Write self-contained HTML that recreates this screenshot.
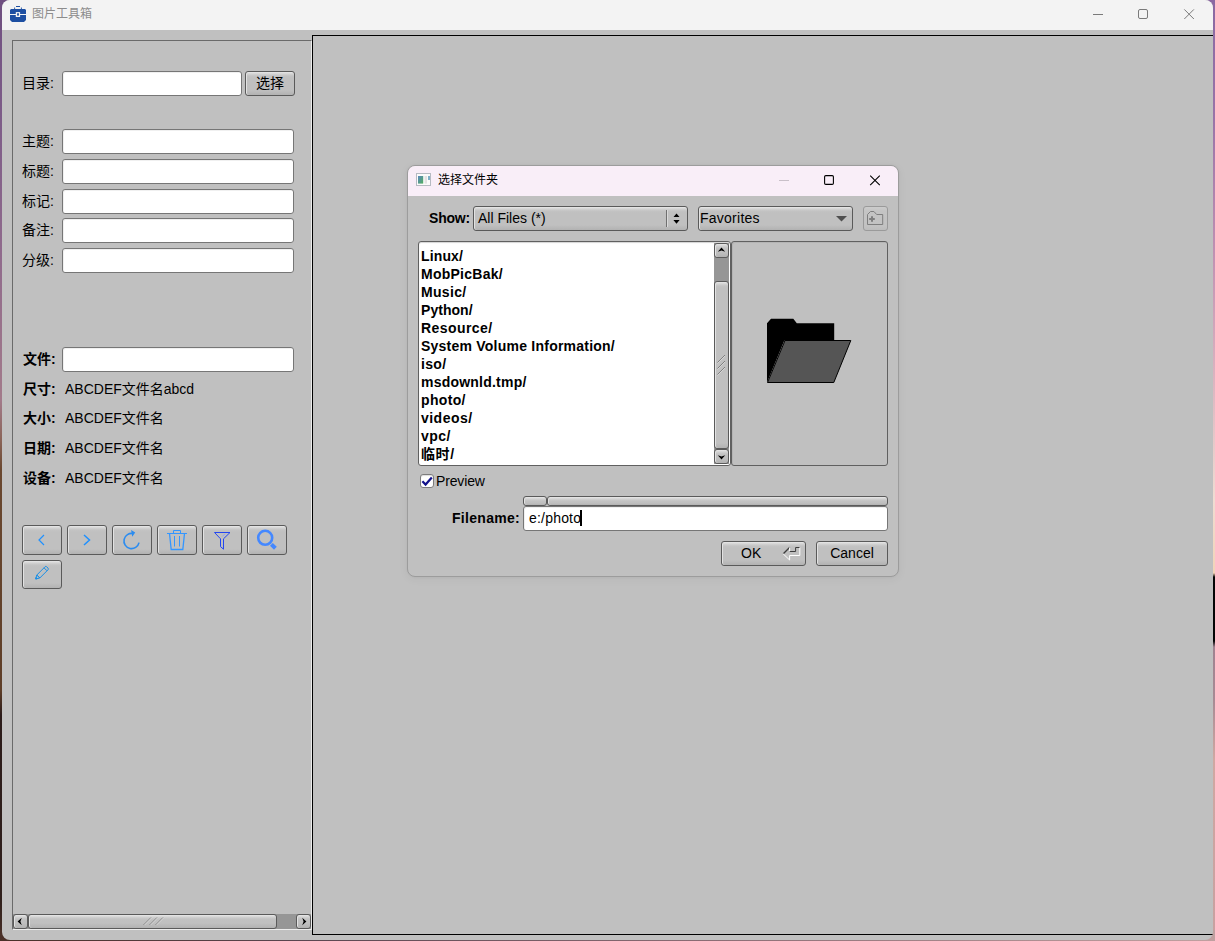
<!DOCTYPE html>
<html lang="zh-CN">
<head>
<meta charset="utf-8">
<title>图片工具箱</title>
<style>
*{box-sizing:border-box;margin:0;padding:0}
html,body{width:1215px;height:941px;overflow:hidden}
body{position:relative;background:#6a5060;font-family:"Liberation Sans","Noto Sans CJK SC",sans-serif;font-size:14px;color:#000}
.abs{position:absolute}
#deskL{left:0;top:0;width:12px;height:941px;background:linear-gradient(to bottom,#6f4f80 0,#7d5c88 120px,#8f6a8c 250px,#a27a8a 400px,#8a6458 440px,#6a4830 470px,#5e3e28 690px,#2c1c1a 715px,#30201c 900px,#4a3028 941px)}
#deskR{left:1203px;top:0;width:12px;height:941px;background:linear-gradient(to bottom,#8a68a2 0,#9a74a8 120px,#c090b2 250px,#dcb4c0 380px,#f0dcd2 500px,#f2d4b8 573px,#050505 577px,#050505 641px,#a08290 647px,#a88a94 700px,#d0a8a2 760px,#c8a0a0 941px)}
#deskB{left:0;top:930px;width:1215px;height:11px;background:linear-gradient(to right,#4a3028 0,#5a4650 300px,#8a6c74 700px,#c0a0a0 1215px)}
#win{left:2px;top:0;width:1210.5px;height:939.5px;background:#c0c0c0;border-radius:8px;overflow:hidden}
#tbar{left:0;top:0;width:100%;height:30px;background:#f3f3f3}
#ttl{left:30px;top:0;height:29px;line-height:28px;font-size:12px;color:#8c8c8c;white-space:nowrap}
.lbl{position:absolute;white-space:nowrap;line-height:20px;height:20px}
.b{font-weight:bold}
.inp{position:absolute;background:#fff;border:1px solid #767676;border-radius:3px;box-shadow:inset 1px 1px 0 #f0f0f0}
.btn{position:absolute;border:1px solid #5a5a5a;border-radius:3px;background:linear-gradient(to bottom,#e8e8e8 0,#d2d2d2 2px,#c3c3c3 4px,#c0c0c0 6px,#c0c0c0 calc(100% - 5px),#b2b2b2 100%);box-shadow:inset 1px 0 0 #e2e2e2}
.btn svg{position:absolute;left:-1px;top:-1px;overflow:visible}

#dlg{left:407px;top:165px;width:492px;height:412px;border:1px solid #9c9c9c;border-radius:8px;background:#c0c0c0;overflow:hidden;box-shadow:0 2px 10px rgba(0,0,0,.05),0 0 3px rgba(0,0,0,.04)}
#dbar{left:0;top:0;width:490px;height:30px;background:#f9eef8}
#d{left:-408px;top:-166px;width:1215px;height:941px}
.row{position:absolute;left:421px;height:18px;line-height:18px;font-weight:bold;white-space:nowrap}
</style>
</head>
<body>
<div id="deskL" class="abs"></div>
<div id="deskR" class="abs"></div>
<div id="deskB" class="abs"></div>

<div id="win" class="abs">
  <div id="tbar" class="abs"></div>
  <!-- app icon -->
  <svg class="abs" style="left:8px;top:6px" width="16" height="16" viewBox="0 0 16 16" fill="#1d4fa2">
    <rect x="6" y="0" width="4" height="1"/>
    <path d="M4.200 1.400h.900v1.700h-.900zM10.900 1.400h.900v1.700h-.900z"/>
    <path d="M1 3h14l1 1v4H0V4z"/>
    <path d="M0 9h16v5l-2 2H2l-2-2z"/>
    <rect x="5.800" y="6.100" width="4.300" height="4.900" fill="#f3f3f3"/>
    <rect x="7.100" y="7.100" width="1.800" height="2.800" rx=".8"/>
  </svg>
  <div id="ttl" class="abs">图片工具箱</div>
  <!-- caption buttons -->
  <svg class="abs" style="left:1080px;top:0" width="130" height="30" viewBox="0 0 130 30" fill="none" stroke="#7a7a7a" stroke-width="1">
    <path d="M11 14.5h10"/>
    <rect x="56.5" y="9.5" width="9" height="9" rx="1.5"/>
    <path d="M102.300 9.400l9.600 9.600M111.900 9.400l-9.600 9.600"/>
  </svg>

  <!-- left scroll frame -->
  <div class="abs" style="left:10px;top:40px;width:300px;height:890px;border-top:1px solid #6a6a6a;border-left:1px solid #6a6a6a;border-right:1px solid #ececec;border-bottom:1px solid #ececec"></div>
  <!-- right panel -->
  <div class="abs" style="left:310px;top:35px;width:910px;height:900px;border:1px solid #000"></div>

  <div id="form" class="abs" style="left:-2px;top:0;width:1215px;height:941px">
    <div class="lbl" style="left:22px;top:73px">目录:</div>
    <div class="inp" style="left:62px;top:71px;width:180px;height:25px"></div>
    <div class="btn" style="left:245px;top:71px;width:50px;height:25px;text-align:center;line-height:22px">选择</div>
    <div class="lbl" style="left:22px;top:131px">主题:</div>
    <div class="inp" style="left:62px;top:129px;width:232px;height:25px"></div>
    <div class="lbl" style="left:22px;top:161px">标题:</div>
    <div class="inp" style="left:62px;top:159px;width:232px;height:25px"></div>
    <div class="lbl" style="left:22px;top:191px">标记:</div>
    <div class="inp" style="left:62px;top:189px;width:232px;height:25px"></div>
    <div class="lbl" style="left:22px;top:220px">备注:</div>
    <div class="inp" style="left:62px;top:218px;width:232px;height:25px"></div>
    <div class="lbl" style="left:22px;top:250px">分级:</div>
    <div class="inp" style="left:62px;top:248px;width:232px;height:25px"></div>
    <div class="lbl b" style="left:23px;top:349px">文件:</div>
    <div class="inp" style="left:62px;top:347px;width:232px;height:25px"></div>
    <div class="lbl b" style="left:23px;top:379px">尺寸:</div>
    <div class="lbl" style="left:65px;top:379px">ABCDEF文件名abcd</div>
    <div class="lbl b" style="left:23px;top:408px">大小:</div>
    <div class="lbl" style="left:65px;top:408px">ABCDEF文件名</div>
    <div class="lbl b" style="left:23px;top:438px">日期:</div>
    <div class="lbl" style="left:65px;top:438px">ABCDEF文件名</div>
    <div class="lbl b" style="left:23px;top:468px">设备:</div>
    <div class="lbl" style="left:65px;top:468px">ABCDEF文件名</div>
  </div>
  <div id="tools" class="abs" style="left:-2px;top:0;width:1215px;height:941px">
    <div class="btn" style="left:22px;top:525px;width:40px;height:30px"><svg width="40" height="30" viewBox="0 0 40 30" fill="none" stroke="#1e90ff" stroke-width="1.2"><path d="M22 10l-5 5 5 5"/></svg></div>
    <div class="btn" style="left:67px;top:525px;width:40px;height:30px"><svg width="40" height="30" viewBox="0 0 40 30" fill="none" stroke="#1e90ff" stroke-width="1.5"><path d="M17 10l5.5 5-5.5 5"/></svg></div>
    <div class="btn" style="left:112px;top:525px;width:40px;height:30px"><svg width="40" height="30" viewBox="0 0 40 30" fill="none" stroke="#2b8cf0" stroke-width="1.6"><path d="M21.2 8.6A7.6 7.6 0 1 0 27 17.6"/><path d="M19.1 5l4.1 2.6-3 4.1z" fill="#2b8cf0" stroke="none"/></svg></div>
    <div class="btn" style="left:157px;top:525px;width:40px;height:30px"><svg width="40" height="30" viewBox="0 0 40 30" fill="none" stroke="#3396ff" stroke-width="1"><path d="M10 8.5h20"/><path d="M16.5 8.5v-3h7v3"/><path d="M12.5 8.5l1.7 16h11.6l1.7-16" stroke-width="1.3"/><path d="M17.5 11v10.5M22.5 11v10.5"/></svg></div>
    <div class="btn" style="left:202px;top:525px;width:40px;height:30px"><svg width="40" height="30" viewBox="0 0 40 30" fill="none" stroke="#2347f0" stroke-width="1"><path d="M12.5 7.5h15.5l-6.5 6.3v10.4l-3-2.6v-7.8z"/><path d="M20.2 11.5l2.6-2.6" stroke="#8aa0f8"/></svg></div>
    <div class="btn" style="left:247px;top:525px;width:40px;height:30px"><svg width="40" height="30" viewBox="0 0 40 30" fill="none" stroke="#4488ff"><circle cx="18.2" cy="12.8" r="7" stroke-width="2.6"/><path d="M24.4 19.4l4 3.8" stroke-width="4"/></svg></div>
    <div class="btn" style="left:22px;top:560px;width:40px;height:29px"><svg width="40" height="29" viewBox="0 0 40 29" fill="none" stroke="#1a8fe6" stroke-width="1"><path d="M14.8 15L23 6.8a1.2 1.2 0 0 1 1.7 0l1.3 1.3a1.2 1.2 0 0 1 0 1.7L17.8 18z"/><path d="M22 7.8l3 3"/><path d="M14.8 15l-1.1 4 4.1-1z"/><path d="M13.7 19l1.6-.4-1.2-1.2z" fill="#1a8fe6"/></svg></div>
  </div>
  <div id="hscroll" class="abs" style="left:11px;top:914px;width:298px;height:15px;background:#969696">
    <div class="btn" style="left:0;top:0;width:15px;height:15px;border-radius:3px"><svg width="15" height="15" viewBox="0 0 15 15"><path d="M4.6 7.5L8.8 3.8 7.4 7.5 8.8 11.2z" fill="#000"/></svg></div>
    <div class="btn" style="left:15px;top:0;width:249px;height:15px;border-radius:3px"><svg width="249" height="15" viewBox="0 0 249 15" fill="none"><path d="M115.5 11l7.5-7.5M121.5 11l7.5-7.5M127.5 11l7.5-7.5" stroke="#808080" stroke-width="1"/><path d="M116.5 11l7.5-7.5M122.5 11l7.5-7.5M128.5 11l7.5-7.5" stroke="#dcdcdc" stroke-width=".8"/></svg></div>
    <div class="btn" style="left:283px;top:0;width:15px;height:15px;border-radius:3px"><svg width="15" height="15" viewBox="0 0 15 15"><path d="M10.4 7.5L6.2 3.8 7.6 7.5 6.2 11.2z" fill="#000"/></svg></div>
  </div>
</div>

<div id="dlg" class="abs">
  <div id="dbar" class="abs"></div>
  <div id="d" class="abs">
    <!-- default window icon -->
    <svg class="abs" style="left:416px;top:173px" width="15" height="13" viewBox="0 0 15 13">
      <defs><linearGradient id="gi" x1="0" y1="0" x2="1" y2="1"><stop offset="0" stop-color="#5b86c0"/><stop offset="1" stop-color="#4fae5c"/></linearGradient></defs>
      <rect x=".5" y=".5" width="14" height="12" fill="#fbfbfb" stroke="#b6bac2"/>
      <rect x="2" y="3" width="5.2" height="7.6" fill="url(#gi)"/>
      <rect x="8.6" y="3" width="2.4" height="7.6" fill="#e2e2e2"/>
      <rect x="12" y="3" width="2" height="4" fill="#7fb0c8"/>
    </svg>
    <div class="abs" style="left:438px;top:166px;height:29px;line-height:29px;font-size:12px;white-space:nowrap">选择文件夹</div>
    <svg class="abs" style="left:770px;top:166px" width="125" height="30" viewBox="0 0 125 30" fill="none" stroke="#000" stroke-width="1.1">
      <path d="M9 14.5h10" stroke="#c9c0c9" stroke-width="1"/>
      <rect x="54.6" y="9.6" width="8.8" height="8.8" rx="1.2"/>
      <path d="M100.2 9.6l9.6 9.6M109.8 9.6l-9.6 9.6"/>
    </svg>

    <div class="lbl b" style="left:429px;top:208px;letter-spacing:-.2px">Show:</div>
    <div class="btn" style="left:473px;top:206px;width:215px;height:25px;line-height:22px;padding-left:4px;white-space:nowrap">All Files (*)
      <svg width="215" height="25" viewBox="0 0 215 25"><path d="M193.5 4v17" stroke="#707070"/><path d="M194.5 4v17" stroke="#dadada"/><path d="M203.5 7.4l3 3.6h-6zM203.500 17.800l3.100-3.700h-6.200z" fill="#000"/></svg>
    </div>
    <div class="btn" style="left:698px;top:206px;width:155px;height:25px;line-height:22px;padding-left:1px;white-space:nowrap;letter-spacing:.25px">Favorites
      <svg width="155" height="25" viewBox="0 0 155 25"><path d="M138 10h11l-5.500 5.600z" fill="#505050"/></svg>
    </div>
    <div class="abs" style="left:863px;top:206px;width:25px;height:25px;border:1px solid #9a9a9a;border-radius:3px;background:linear-gradient(to bottom,#cccccc 0,#c4c4c4 4px,#c2c2c2 calc(100% - 4px),#bcbcbc 100%)">
      <svg class="abs" style="left:-1px;top:-1px" width="25" height="25" viewBox="0 0 25 25" fill="none" stroke="#7e7e7e" stroke-width="1"><path d="M4.500 8.500l3-3h3.400l2.800 3h6v10h-15.200z"/><path d="M6.200 13h5.600M9 10.200v5.600" stroke-width="2"/></svg>
    </div>

    <!-- file list -->
    <div class="abs" style="left:418px;top:241px;width:313px;height:225px;background:#fff;border:1px solid #606060;border-radius:3px;box-shadow:inset 0 1px 1px #d4d4d4"></div>
    <div class="row" style="top:247px;letter-spacing:0.13px">Linux/</div>
    <div class="row" style="top:265px;letter-spacing:0.25px">MobPicBak/</div>
    <div class="row" style="top:283px;letter-spacing:0.33px">Music/</div>
    <div class="row" style="top:301px;letter-spacing:0.04px">Python/</div>
    <div class="row" style="top:319px;letter-spacing:0.44px">Resource/</div>
    <div class="row" style="top:337px;letter-spacing:0.23px">System Volume Information/</div>
    <div class="row" style="top:355px;letter-spacing:0.33px">iso/</div>
    <div class="row" style="top:373px;letter-spacing:0.22px">msdownld.tmp/</div>
    <div class="row" style="top:391px;letter-spacing:0.33px">photo/</div>
    <div class="row" style="top:409px;letter-spacing:0.47px">videos/</div>
    <div class="row" style="top:427px;letter-spacing:0.45px">vpc/</div>
    <div class="row" style="top:445px;letter-spacing:0.60px">临时/</div>
    <!-- vertical scrollbar -->
    <div class="abs" style="left:714px;top:243px;width:15px;height:221px;background:#969696">
      <div class="btn" style="left:0;top:0;width:15px;height:15px;border-radius:3px"><svg width="15" height="15" viewBox="0 0 15 15"><path d="M7.500 4.600L11.200 8.800 7.500 7.400 3.800 8.800z" fill="#000"/></svg></div>
      <div class="btn" style="left:0;top:38px;width:15px;height:168px;border-radius:3px"><svg width="15" height="168" viewBox="0 0 15 168" fill="none"><path d="M3.500 81.500l7.500-7.500M3.500 87.500l7.500-7.500M3.500 93.500l7.500-7.500" stroke="#808080"/><path d="M3.500 82.500l7.500-7.500M3.500 88.500l7.500-7.500M3.500 94.500l7.500-7.500" stroke="#dcdcdc" stroke-width=".8"/></svg></div>
      <div class="btn" style="left:0;top:206px;width:15px;height:15px;border-radius:3px"><svg width="15" height="15" viewBox="0 0 15 15"><path d="M7.500 10.400L11.200 6.200 7.500 7.600 3.800 6.200z" fill="#000"/></svg></div>
    </div>
    <!-- preview box -->
    <div class="abs" style="left:731px;top:241px;width:157px;height:225px;border:1px solid #606060;border-radius:3px;box-shadow:inset 1px 1px 0 #b4b4b4"></div>
    <svg class="abs" style="left:760px;top:312px" width="100" height="80" viewBox="0 0 100 80">
      <path d="M7 11.200l4-4.500h22.300l3.500 4.500h37.400v17.500h-50l-17.200 41.800z" fill="#000"/>
      <path d="M25 28.500h65.800l-17 42h-66.300z" fill="#555" stroke="#000" stroke-width="1"/>
    </svg>

    <!-- preview checkbox -->
    <div class="abs" style="left:420px;top:474px;width:14px;height:14px;background:#fff;border:1px solid #7c7c7c;border-radius:3px;box-shadow:inset 0 1px 1px #ddd"></div>
    <svg class="abs" style="left:420px;top:474px" width="14" height="14" viewBox="0 0 14 14"><path d="M2.400 7.200l3.200 3.400 6.200-7" fill="none" stroke="#12128c" stroke-width="2.200"/></svg>
    <div class="lbl" style="left:436px;top:471px;letter-spacing:-.15px">Preview</div>

    <!-- path buttons -->
    <div class="btn" style="left:523px;top:496px;width:24px;height:10px;border-radius:3px"></div>
    <div class="btn" style="left:547px;top:496px;width:341px;height:10px;border-radius:3px"></div>
    <div class="lbl b" style="left:452px;top:508px;letter-spacing:.3px">Filename:</div>
    <div class="inp" style="left:523px;top:506px;width:365px;height:25px;line-height:22px;padding-left:5px;white-space:nowrap;letter-spacing:.2px">e:/photo<span style="display:inline-block;width:2px;height:16px;background:#000;vertical-align:-3px;margin-left:-1px"></span></div>

    <div class="btn" style="left:721px;top:541px;width:85px;height:25px;line-height:22px;padding-left:19px">OK
      <svg width="85" height="25" viewBox="0 0 85 25" fill="none"><path d="M62.300 12.800l6.500-6.500" stroke="#3c3c3c" stroke-width="1.300"/><path d="M68.600 10.500h6v-4h4.200" stroke="#3c3c3c"/><path d="M68.600 6.400v4M78.800 6.500v8h-10.200v4.500l-6.600-6.300" stroke="#fff"/></svg>
    </div>
    <div class="btn" style="left:816px;top:541px;width:72px;height:25px;line-height:22px;text-align:center">Cancel</div>
  </div>
</div>
</body>
</html>
